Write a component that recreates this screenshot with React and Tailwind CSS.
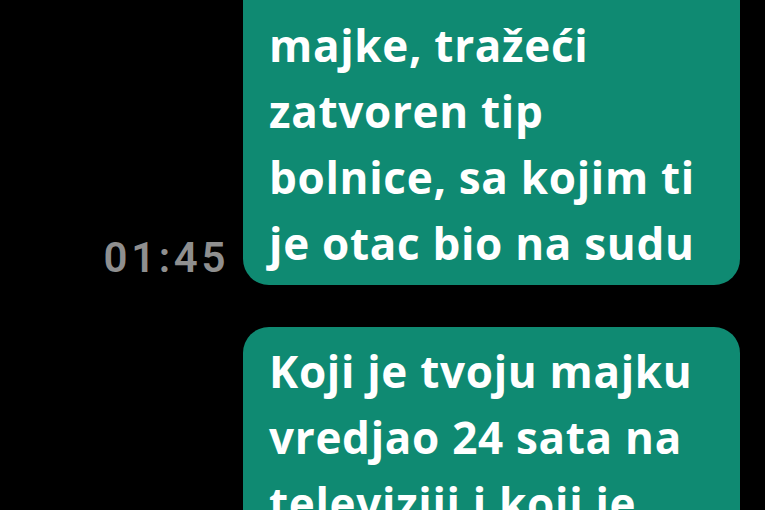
export default function App() {
  const font = { fontFamily: "'Open Sans', Roboto, sans-serif" };
  return (
    <div className="h-[510px] w-[765px] overflow-hidden bg-black" style={font}>
      <div className="flex items-end justify-end pr-[25px]">
        <div className="mr-[14px] mb-[5px] text-[42px] leading-[44px] font-semibold text-[#8f8f8f] tracking-[3.6px]" style={{ fontFamily: "Roboto, sans-serif" }}>01:45</div>
        <div className="w-[497px] rounded-b-[26px] bg-[#0f8a72] pl-[26px] pr-[10px] pt-[12px] pb-[9px] text-[44px] leading-[66px] font-bold text-white tracking-[0.7px]">
          majke, tražeći<br />zatvoren tip<br />bolnice, sa kojim ti<br />je otac bio na sudu
        </div>
      </div>
      <div className="mt-[42px] flex justify-end pr-[25px]">
        <div className="w-[497px] rounded-t-[26px] bg-[#0f8a72] pl-[26px] pr-[10px] pt-[11px] text-[44px] leading-[66px] font-bold text-white tracking-[0.7px]">
          Koji je tvoju majku<br />vredjao 24 sata na<br />televiziji i koji je
        </div>
      </div>
    </div>
  );
}
